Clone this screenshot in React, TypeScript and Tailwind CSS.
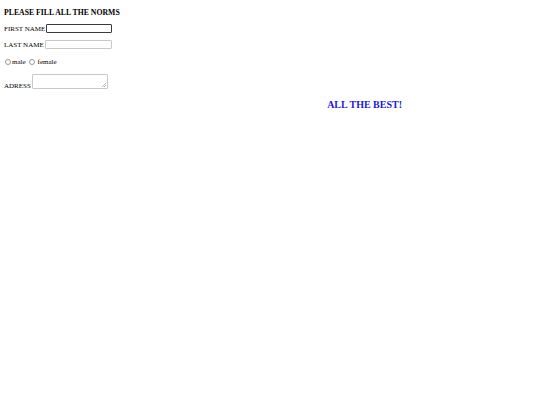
export default function App() {
  return (
    <div
      className="w-[540px] h-[405px] bg-white text-black px-[4px] pt-[8px]"
      style={{ fontFamily: '"Liberation Serif", "Times New Roman", serif' }}
    >
      <h4 className="text-[7.75px] font-bold leading-[9px]">PLEASE FILL ALL THE NORMS</h4>

      <div className="mt-[7px] flex items-end text-[7px] leading-[8px]">
        <span>FIRST NAME</span>
        <input
          type="text"
          className="ml-[1px] w-[66px] h-[9px] border border-[#3b3b3b] rounded-[1px] outline-none"
        />
      </div>

      <div className="mt-[7px] flex items-end text-[7px] leading-[8px]">
        <span>LAST NAME</span>
        <input
          type="text"
          className="ml-[1px] w-[67px] h-[9px] border border-[#c8c8c8] rounded-[1px] outline-none"
        />
      </div>

      <div className="mt-[9px] flex items-center text-[7px] leading-[8px]">
        <span className="ml-[1px] w-[6px] h-[6px] rounded-full border border-[#9a9a9a]" />
        <span className="ml-[1px]">male</span>
        <span className="ml-[3px] w-[6px] h-[6px] rounded-full border border-[#9a9a9a]" />
        <span className="ml-[3px]">female</span>
      </div>

      <div className="mt-[8px] flex items-end text-[7px] leading-[8px]">
        <span className="mb-[-1px]">ADRESS</span>
        <div className="relative ml-[1px] w-[76px] h-[15px] border border-[#c8c8c8] rounded-[1px]">
          <svg className="absolute right-[1px] bottom-[1px]" width="4" height="4" viewBox="0 0 4 4">
            <path d="M0 4 L4 0 M2 4 L4 2" stroke="#a0a0a0" strokeWidth="0.7" />
          </svg>
        </div>
      </div>

      <div className="mt-[10px] flex justify-end pr-[134px]">
        <span className="text-[10px] font-bold text-[#1a1acc] leading-[12px]">ALL THE BEST!</span>
      </div>
    </div>
  )
}
